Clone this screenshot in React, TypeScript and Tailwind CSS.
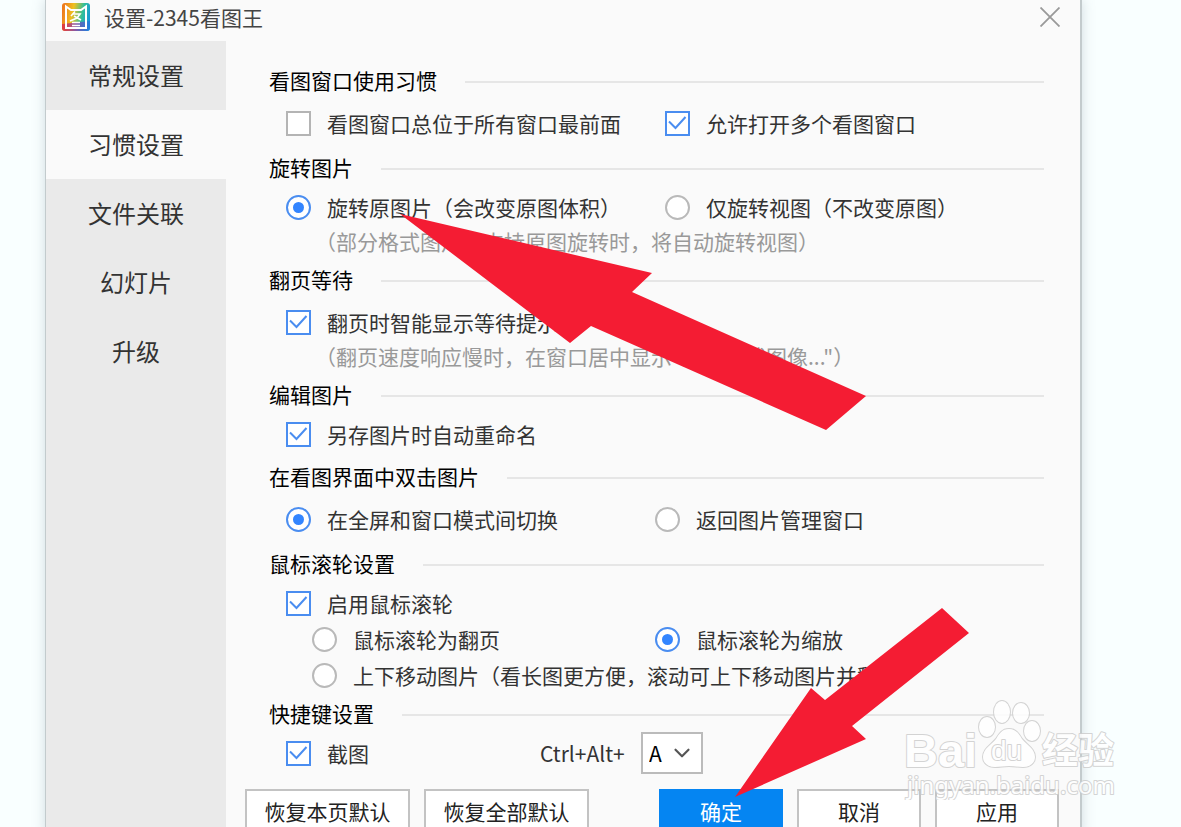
import { useState } from "react";
import type { ReactNode } from "react";
import { ChevronDown } from "lucide-react";

const tabs = ["常规设置", "习惯设置", "文件关联", "幻灯片", "升级"];

type OptionProps = {
  label: string;
  type?: "checkbox" | "radio";
  name?: string;
  checked?: boolean;
  className?: string;
};

const Option = ({
  label,
  type = "checkbox",
  name,
  checked = false,
  className = "",
}: OptionProps) => (
  <label className={`flex shrink-0 items-center gap-4 whitespace-nowrap ${className}`}>
    {type === "checkbox" ? (
      <span className="relative size-[25px] shrink-0">
        <input
          type="checkbox"
          name={name}
          defaultChecked={checked}
          className="peer block size-[25px] appearance-none border-2 border-[#b4b4b4] bg-white checked:border-[#4a8df0]"
        />
        <svg
          viewBox="0 0 25 25"
          className="pointer-events-none absolute inset-0 hidden size-[25px] peer-checked:block"
          fill="none"
          stroke="#4a8df0"
          strokeWidth="2"
        >
          <path d="M4 10.5 10.5 17 20.5 6" />
        </svg>
      </span>
    ) : (
      <input
        type="radio"
        name={name}
        defaultChecked={checked}
        className="grid size-[25px] shrink-0 appearance-none place-content-center rounded-full border-2 border-[#b9b9b9] bg-white before:size-[11px] before:rounded-full checked:border-[#4a8df0] checked:before:bg-[#3385ff]"
      />
    )}
    <span>{label}</span>
  </label>
);

const Section = ({
  title,
  tight = false,
  className = "",
  children,
}: {
  title: string;
  tight?: boolean;
  className?: string;
  children: ReactNode;
}) => (
  <section className={className}>
    <div className="flex h-7 items-center gap-7">
      <h2 className="pb-1 whitespace-nowrap text-black">{title}</h2>
      <div className="h-[2px] flex-1 bg-[#e6e6e6]" />
    </div>
    <div className={tight ? "pt-1.5 pl-[17px]" : "pt-[9px] pl-[17px]"}>
      {children}
    </div>
  </section>
);

const Row = ({ children }: { children: ReactNode }) => (
  <div className="flex h-9 items-center">{children}</div>
);

const Hint = ({ children }: { children: ReactNode }) => (
  <p className="flex h-8 items-center pl-[29px] whitespace-nowrap text-[#999]">
    {children}
  </p>
);

const FooterButton = ({
  children,
  wide = false,
  primary = false,
}: {
  children: ReactNode;
  wide?: boolean;
  primary?: boolean;
}) => (
  <button
    type="button"
    className={`h-[46px] border-2 pb-0.5 whitespace-nowrap ${wide ? "w-[165px]" : "w-[124px]"} ${
      primary
        ? "border-[#0585f2] bg-[#0585f2] text-white"
        : "border-[#c3c3c3] bg-white text-[#222]"
    }`}
  >
    {children}
  </button>
);

const AppLogo = () => (
  <svg viewBox="0 0 28 28" className="size-7" aria-hidden="true">
    <defs>
      <linearGradient id="logo" x1="0" y1="0.4" x2="1" y2="0.6">
        <stop offset="0" stopColor="#ee7a1c" />
        <stop offset="0.35" stopColor="#f0c020" />
        <stop offset="0.7" stopColor="#2fc09a" />
        <stop offset="1" stopColor="#1593dc" />
      </linearGradient>
      <linearGradient id="logoBase" x1="0" y1="0" x2="1" y2="0">
        <stop offset="0" stopColor="#e2263d" />
        <stop offset="0.5" stopColor="#8a3fb5" />
        <stop offset="1" stopColor="#1a7fe0" />
      </linearGradient>
    </defs>
    <rect width="28" height="28" rx="3" fill="url(#logo)" />
    <path d="M0 21 28 18V25a3 3 0 0 1-3 3H3a3 3 0 0 1-3-3Z" fill="url(#logoBase)" opacity="0.8" />
    <path d="M4 3.5 9 7h10l5-3.5V25H4Z" fill="none" stroke="#fff" strokeWidth="2" />
    <path
      d="M13 8.5 9 13M11 11h7l-3 4-7 3M12 13l7 4M10 19.5h8M10 22.5h8"
      fill="none"
      stroke="#fff"
      strokeWidth="1.6"
    />
  </svg>
);

const Arrows = () => (
  <svg
    viewBox="0 0 1181 827"
    className="pointer-events-none absolute top-0 left-0 h-[827px] w-[1181px]"
    fill="#f41c33"
    aria-hidden="true"
  >
    <path d="M400 214 652 273 632 292 866 396 826 430 591 326 570 343Z" />
    <path d="M735 797 811 688 825 700 942 608 969 633 852 726 866 739Z" />
  </svg>
);

const Watermark = () => (
  <svg
    viewBox="0 0 220 100"
    className="pointer-events-none absolute top-[700px] left-[900px] h-[100px] w-[220px]"
    fill="#fff"
    stroke="#cdcdcd"
    strokeWidth="2"
    strokeLinejoin="round"
    paintOrder="stroke"
    opacity="0.85"
    fontFamily="'Liberation Sans', 'Noto Sans CJK SC', sans-serif"
  >
    <text x="4" y="67" fontSize="47" fontWeight="bold">Bai</text>
    <ellipse cx="87" cy="27" rx="8" ry="10" />
    <ellipse cx="102" cy="12" rx="8" ry="11" />
    <ellipse cx="121" cy="13" rx="8" ry="10" />
    <ellipse cx="132" cy="31" rx="8" ry="10" />
    <path d="M109 29c-7 0-10 5-13 10-5 6-13 10-13 18 0 6 5 10 12 10 5 0 9-1 14-1s9 1 14 1c7 0 12-4 12-10 0-8-8-12-13-18-3-5-6-10-13-10Z" />
    <text x="91" y="60" fontSize="28">du</text>
    <text x="142" y="64" fontSize="36" fontWeight="bold">经验</text>
    <text x="7" y="94" fontSize="24" fontFamily="'Noto Sans', sans-serif">jingyan.baidu.com</text>
  </svg>
);

export default function App() {
  const [activeTab, setActiveTab] = useState("习惯设置");

  return (
    <div className="relative h-screen overflow-hidden bg-[#f9ffff] pr-[99px] pl-[45px] font-['Noto_Sans_CJK_SC',sans-serif] text-[21px] leading-7 text-[#333]">
      <main className="flex min-h-screen flex-col border-r-2 border-l border-[#c3cbcd] bg-[#fafafa] shadow-[0_0_12px_rgba(90,110,130,0.25)]">
        <header className="flex h-[41px] items-center pr-5 pb-[7px] pl-4">
          <AppLogo />
          <h1 className="flex-1 pl-3.5 text-[#444]">设置-2345看图王</h1>
          <button type="button" aria-label="关闭">
            <svg viewBox="0 0 20 20" className="size-5" stroke="#999" strokeWidth="1.8">
              <path d="M0.5 0.5 19.5 19.5M19.5 0.5 0.5 19.5" />
            </svg>
          </button>
        </header>

        <div className="flex flex-1">
          <nav className="flex w-[180px] shrink-0 flex-col bg-[#eaeaea]">
            {tabs.map((tab) => (
              <button
                key={tab}
                type="button"
                onClick={() => setActiveTab(tab)}
                className={`h-[69px] pb-0.5 text-2xl text-[#333] ${
                  tab === activeTab ? "bg-[#fafafa]" : ""
                }`}
              >
                {tab}
              </button>
            ))}
          </nav>

          <form className="flex-1">
            <div className="pt-[27px] pr-9 pl-[43px]">
              <Section title="看图窗口使用习惯">
                <Row>
                  <Option label="看图窗口总位于所有窗口最前面" className="w-[379px]" />
                  <Option label="允许打开多个看图窗口" checked />
                </Row>
              </Section>

              <Section title="旋转图片" tight className="pt-3.5">
                <Row>
                  <Option
                    type="radio"
                    name="rotate"
                    label="旋转原图片（会改变原图体积）"
                    checked
                    className="w-[379px]"
                  />
                  <Option type="radio" name="rotate" label="仅旋转视图（不改变原图）" />
                </Row>
                <Hint>（部分格式图片不支持原图旋转时，将自动旋转视图）</Hint>
              </Section>

              <Section title="翻页等待" className="pt-2.5">
                <Row>
                  <Option label="翻页时智能显示等待提示" checked />
                </Row>
                <Hint>（翻页速度响应慢时，在窗口居中显示"正在加载图像..."）</Hint>
              </Section>

              <Section title="编辑图片" tight className="pt-2.5">
                <Row>
                  <Option label="另存图片时自动重命名" checked />
                </Row>
              </Section>

              <Section title="在看图界面中双击图片" className="pt-3">
                <Row>
                  <Option
                    type="radio"
                    name="doubleClick"
                    label="在全屏和窗口模式间切换"
                    checked
                    className="w-[369px]"
                  />
                  <Option type="radio" name="doubleClick" label="返回图片管理窗口" />
                </Row>
              </Section>

              <Section title="鼠标滚轮设置" tight className="pt-3.5">
                <Row>
                  <Option label="启用鼠标滚轮" checked />
                </Row>
                <div className="pl-[26px]">
                  <Row>
                    <Option
                      type="radio"
                      name="wheel"
                      label="鼠标滚轮为翻页"
                      className="w-[343px]"
                    />
                    <Option type="radio" name="wheel" label="鼠标滚轮为缩放" checked />
                  </Row>
                  <Row>
                    <Option
                      type="radio"
                      name="wheel"
                      label="上下移动图片（看长图更方便，滚动可上下移动图片并翻页）"
                    />
                  </Row>
                </div>
              </Section>

              <Section title="快捷键设置" tight className="pt-2">
                <Row>
                  <Option label="截图" checked className="w-[254px]" />
                  <label htmlFor="hotkey" className="w-[101px]">
                    Ctrl+Alt+
                  </label>
                  <span className="relative">
                    <select
                      id="hotkey"
                      defaultValue="A"
                      className="block h-[42px] w-[62px] appearance-none border-2 border-[#bbb] bg-white pl-1.5 text-black"
                    >
                      <option>A</option>
                      <option>B</option>
                      <option>C</option>
                    </select>
                    <ChevronDown
                      size={26}
                      strokeWidth={2}
                      className="pointer-events-none absolute top-2 right-2 text-[#555]"
                    />
                  </span>
                </Row>
              </Section>
            </div>

            <footer className="flex justify-between pt-[18px] pr-[21px] pl-[19px]">
              <div className="flex gap-3.5">
                <FooterButton wide>恢复本页默认</FooterButton>
                <FooterButton wide>恢复全部默认</FooterButton>
              </div>
              <div className="flex gap-3.5">
                <FooterButton primary>确定</FooterButton>
                <FooterButton>取消</FooterButton>
                <FooterButton>应用</FooterButton>
              </div>
            </footer>
          </form>
        </div>
      </main>

      <Arrows />
      <Watermark />
    </div>
  );
}
